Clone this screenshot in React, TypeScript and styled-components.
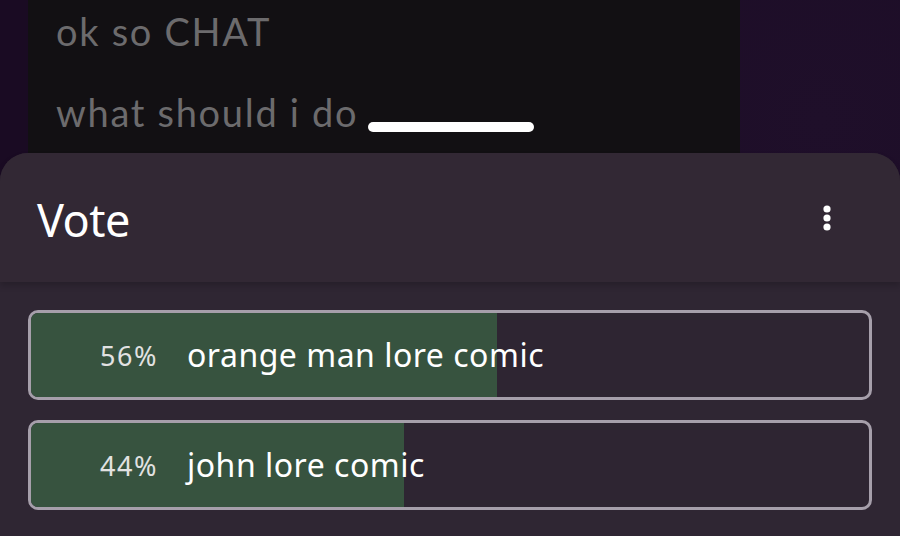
import React from "react";
import styled, { createGlobalStyle } from "styled-components";

const GlobalStyle = createGlobalStyle`
  html, body {
    margin: 0;
    padding: 0;
    background: #1b0c24;
  }
  body {
    width: 900px;
    height: 536px;
    overflow: hidden;
  }
`;

const Screen = styled.div`
  width: 900px;
  height: 536px;
  display: flex;
  flex-direction: column;
  background: radial-gradient(circle at 820px 120px, #1f0f2a 0%, #1a0b23 60%);
  overflow: hidden;
`;

const ChatCard = styled.div`
  margin-left: 28px;
  width: 712px;
  height: 153px;
  flex-shrink: 0;
  background: #121013;
  box-sizing: border-box;
  padding: 9px 0 0 28px;
  display: flex;
  flex-direction: column;
  gap: 37px;
`;

const ChatLine = styled.div`
  font-family: Lato, "Noto Sans", sans-serif;
  font-size: 38px;
  line-height: 44px;
  color: #6c6b6d;
  display: flex;
  align-items: center;
  letter-spacing: 1.7px;
`;

const Blank = styled.span`
  display: inline-block;
  width: 166px;
  height: 10px;
  border-radius: 5px;
  background: #ffffff;
  margin-left: 10px;
  margin-top: 30px;
`;

const Sheet = styled.div`
  flex: 1;
  background: #2f2633;
  border-radius: 28px 28px 0 0;
  display: flex;
  flex-direction: column;
  font-family: "Noto Sans", sans-serif;
`;

const Header = styled.div`
  height: 129px;
  flex-shrink: 0;
  background: #322834;
  border-radius: 28px 28px 0 0;
  display: flex;
  align-items: center;
  justify-content: space-between;
  padding: 0 69px 0 37px;
  box-shadow: 0 4px 6px rgba(0, 0, 0, 0.18);
`;

const Title = styled.div`
  font-size: 45px;
  color: #ffffff;
  letter-spacing: -0.5px;
  margin-top: 4px;
`;

const Options = styled.div`
  display: flex;
  flex-direction: column;
  gap: 20px;
  padding: 28px 28px 0;
`;

const OptionBox = styled.div`
  position: relative;
  height: 90px;
  box-sizing: border-box;
  border: 3px solid #a69fab;
  border-radius: 10px;
  overflow: hidden;
  background: #2e2532;
  display: flex;
  align-items: center;
`;

const Fill = styled.div`
  position: absolute;
  left: 0;
  top: 0;
  bottom: 0;
  background: #37533f;
`;

const Percent = styled.span`
  position: relative;
  width: 87px;
  margin-left: 69px;
  font-size: 27px;
  letter-spacing: 1.5px;
  color: #e2e2e2;
`;

const Label = styled.span`
  position: relative;
  font-size: 32px;
  letter-spacing: 0.5px;
  color: #ffffff;
  margin-top: -2px;
`;

const options = [
  { pct: 56, label: "orange man lore comic", fill: 466 },
  { pct: 44, label: "john lore comic", fill: 373 },
];

export default function App() {
  return (
    <>
      <GlobalStyle />
      <Screen>
        <ChatCard>
          <ChatLine>ok so CHAT</ChatLine>
          <ChatLine>
            what should i do
            <Blank />
          </ChatLine>
        </ChatCard>
        <Sheet>
          <Header>
            <Title>Vote</Title>
            <svg width="8" height="26" viewBox="0 0 8 26">
              <circle cx="4" cy="4" r="3.6" fill="#fff" />
              <circle cx="4" cy="13" r="3.6" fill="#fff" />
              <circle cx="4" cy="22" r="3.6" fill="#fff" />
            </svg>
          </Header>
          <Options>
            {options.map((o) => (
              <OptionBox key={o.label}>
                <Fill style={{ width: o.fill }} />
                <Percent>{o.pct}%</Percent>
                <Label>{o.label}</Label>
              </OptionBox>
            ))}
          </Options>
        </Sheet>
      </Screen>
    </>
  );
}
